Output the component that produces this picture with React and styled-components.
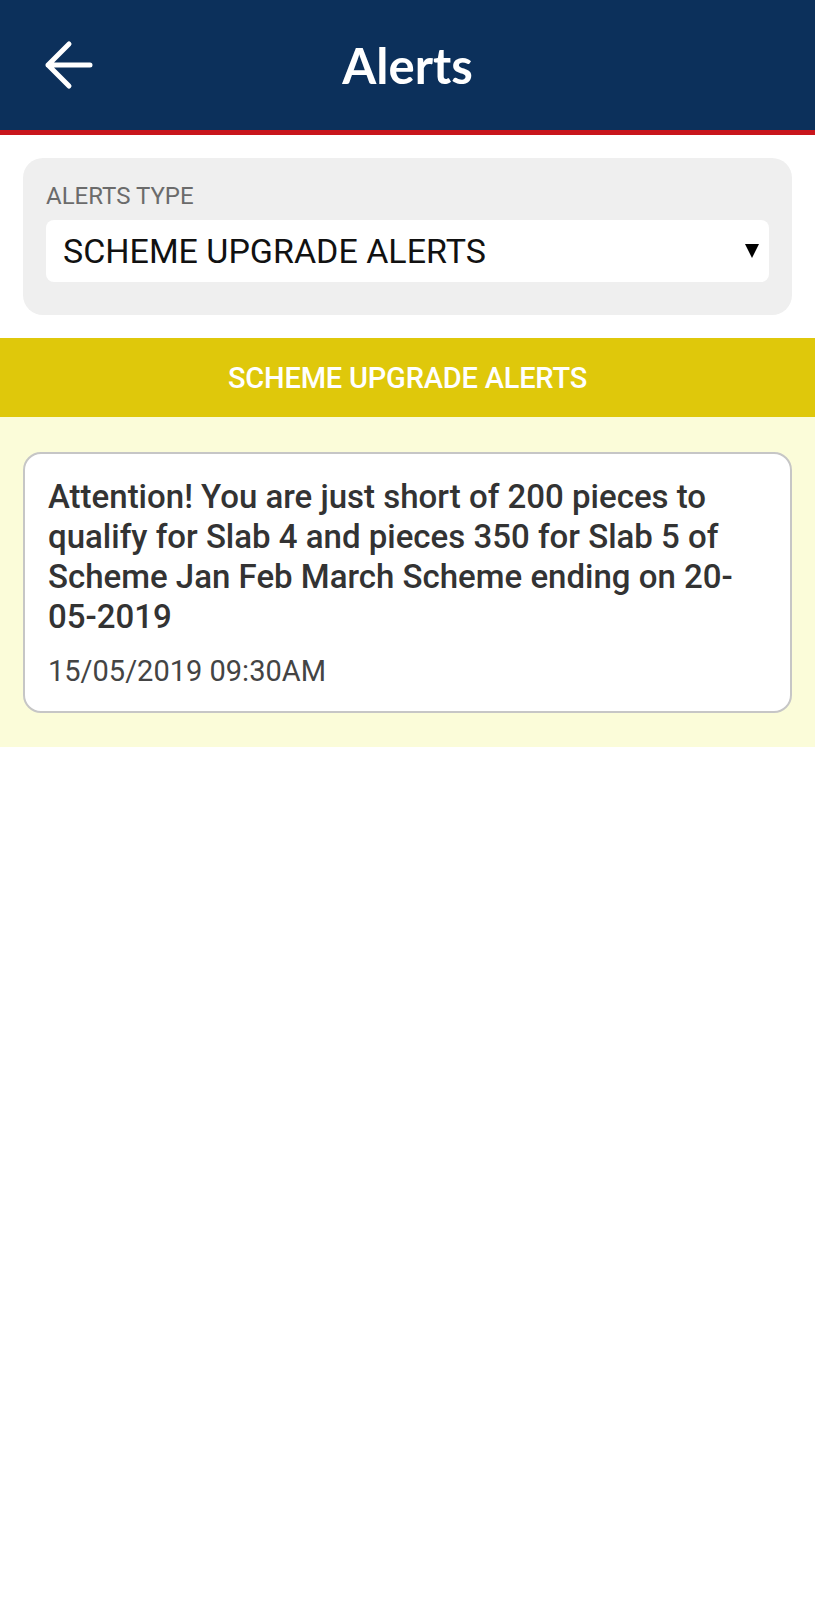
import styled, { createGlobalStyle } from "styled-components";

const GlobalStyle = createGlobalStyle`
    body {
        margin: 0;
        background: #ffffff;
        font-family: Roboto, "Liberation Sans", sans-serif;
    }
`
const Header = styled.header`
    height: 130px;
    background: #0c305b;
    border-bottom: 5px solid #c8151c;
    display: flex;
    align-items: center;
    justify-content: center;
    position: relative;
`
const BackButton = styled.button`
    position: absolute;
    left: 40px;
    top: 50%;
    transform: translateY(-50%);
    background: none;
    border: 0;
    padding: 0;
    width: 56px;
    height: 56px;
    display: flex;
    align-items: center;
    justify-content: center;
`
const Title = styled.h1`
    margin: 0;
    color: #ffffff;
    font-family: Lato, "Open Sans", sans-serif;
    font-weight: 700;
    font-size: 49px;
`
const Panel = styled.div`
    margin: 23px 23px 0;
    background: #efefef;
    border-radius: 20px;
    padding: 24px 23px 33px;
    display: flex;
    flex-direction: column;
    gap: 10px;
`
const Label = styled.label`
    font-size: 24px;
    color: #6b6b6b;
    line-height: 28px;
`
const SelectBox = styled.div`
    height: 62px;
    background: #ffffff;
    border-radius: 8px;
    display: flex;
    align-items: center;
    justify-content: space-between;
    padding: 0 10px 0 17px;
    font-size: 34px;
    color: #111111;
`
const Banner = styled.div`
    margin-top: 23px;
    height: 79px;
    background: #dfc80b;
    color: #ffffff;
    display: flex;
    align-items: center;
    justify-content: center;
    font-size: 29px;
    font-weight: 500;
    letter-spacing: -0.2px;
`
const AlertList = styled.div`
    background: #fbfcd9;
    padding: 35px 23px 34px;
    display: flex;
    flex-direction: column;
    gap: 20px;
`
const AlertCard = styled.div`
    background: #ffffff;
    border: 2px solid #c6c6c6;
    border-radius: 18px;
    padding: 23px 23px 23px;
`
const AlertText = styled.p`
    margin: 0;
    font-size: 33px;
    font-weight: 500;
    line-height: 40px;
    color: #333333;
`
const AlertDate = styled.div`
    margin-top: 17px;
    font-size: 29px;
    line-height: 34px;
    color: #444444;
`

export default function App(){
    return(
    <>
        <GlobalStyle />
        <Header>
            <BackButton aria-label="Back">
                <svg width="50" height="50" viewBox="0 0 50 50" fill="none" stroke="#fff" strokeWidth="5" strokeLinecap="round" strokeLinejoin="round">
                    <path d="M5 25h42M26 4L5 25l21 21"/>
                </svg>
            </BackButton>
            <Title>Alerts</Title>
        </Header>
        <Panel>
            <Label>ALERTS TYPE</Label>
            <SelectBox>
                <span>SCHEME UPGRADE ALERTS</span>
                <svg width="14" height="14" viewBox="0 0 14 14">
                    <polygon points="0,0 14,0 7,14" fill="#000"/>
                </svg>
            </SelectBox>
        </Panel>
        <Banner>SCHEME UPGRADE ALERTS</Banner>
        <AlertList>
            <AlertCard>
                <AlertText>
                    Attention! You are just short of 200 pieces to qualify for Slab 4 and pieces 350 for Slab 5 of Scheme Jan Feb March Scheme ending on 20-05-2019
                </AlertText>
                <AlertDate>15/05/2019 09:30AM</AlertDate>
            </AlertCard>
        </AlertList>
    </>
    )
}
